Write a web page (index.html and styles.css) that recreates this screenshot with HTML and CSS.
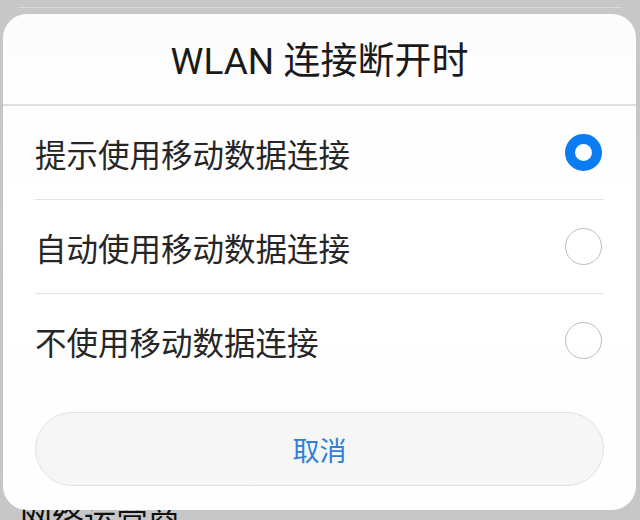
FILE: index.html
```html
<!DOCTYPE html>
<html lang="zh-CN">
<head>
<meta charset="utf-8">
<title>WLAN 连接断开时</title>
<link rel="stylesheet" href="styles.css">
</head>
<body>
<div class="page">
  <div class="page-divider"></div>
  <div class="page-spacer"></div>
  <div class="page-item">网络运营商</div>
</div>

<div class="dialog">
  <div class="dialog-title">WLAN 连接断开时</div>
  <div class="options">
    <div class="option">
      <span class="option-label">提示使用移动数据连接</span>
      <span class="radio radio-on"></span>
    </div>
    <div class="option">
      <span class="option-label">自动使用移动数据连接</span>
      <span class="radio"></span>
    </div>
    <div class="option">
      <span class="option-label">不使用移动数据连接</span>
      <span class="radio"></span>
    </div>
  </div>
  <div class="actions">
    <button class="cancel">取消</button>
  </div>
</div>
</body>
</html>
```

FILE: styles.css
```css
html, body {
  margin: 0;
  padding: 0;
}
body {
  width: 640px;
  height: 520px;
  overflow: hidden;
  background: #c7c7c7;
  font-family: Roboto, "Noto Sans CJK SC", sans-serif;
  position: relative;
}
.page {
  display: flex;
  flex-direction: column;
  padding: 7px 18px 0;
}
.page-divider {
  height: 1px;
  background: #dadada;
}
.page-spacer {
  height: 491px;
}
.page-item {
  font-size: 32px;
  line-height: 40px;
  color: #111;
  padding-left: 2px;
}
.dialog {
  position: absolute;
  left: 3px;
  top: 14px;
  width: 633px;
  height: 496px;
  border-radius: 24px;
  background: linear-gradient(180deg, #fcfcfc 0%, #ffffff 40%, #fefefe 100%);
  display: flex;
  flex-direction: column;
  box-sizing: border-box;
  padding: 0 32px;
}
.dialog-title {
  display: flex;
  align-items: center;
  justify-content: center;
  font-size: 37px;
  color: #1a1a1a;
  border-bottom: 2px solid #dedede;
  margin: 0 -32px;
  padding-bottom: 2px;
  box-sizing: border-box;
  height: 92px;
}
.options {
  display: flex;
  flex-direction: column;
}
.option {
  height: 93px;
  display: flex;
  align-items: center;
  justify-content: space-between;
  border-bottom: 1px solid #e4e4e4;
}
.option:last-child {
  border-bottom: none;
}
.option-label {
  font-size: 31.5px;
  color: #262626;
}
.radio {
  width: 37px;
  height: 37px;
  box-sizing: border-box;
  border-radius: 50%;
  border: 1.5px solid #bdbdbd;
  margin-right: 2px;
}
.radio-on {
  border: 10px solid #0b7cf2;
  background: #ffffff;
}
.actions {
  margin-top: 25px;
  display: flex;
}
.cancel {
  flex: 1;
  height: 74px;
  border-radius: 37px;
  border: 1px solid #e1e1e1;
  background: #f6f6f7;
  color: #2f80d6;
  font-family: Roboto, "Noto Sans CJK SC", sans-serif;
  font-size: 27px;
  padding: 0;
}
```
